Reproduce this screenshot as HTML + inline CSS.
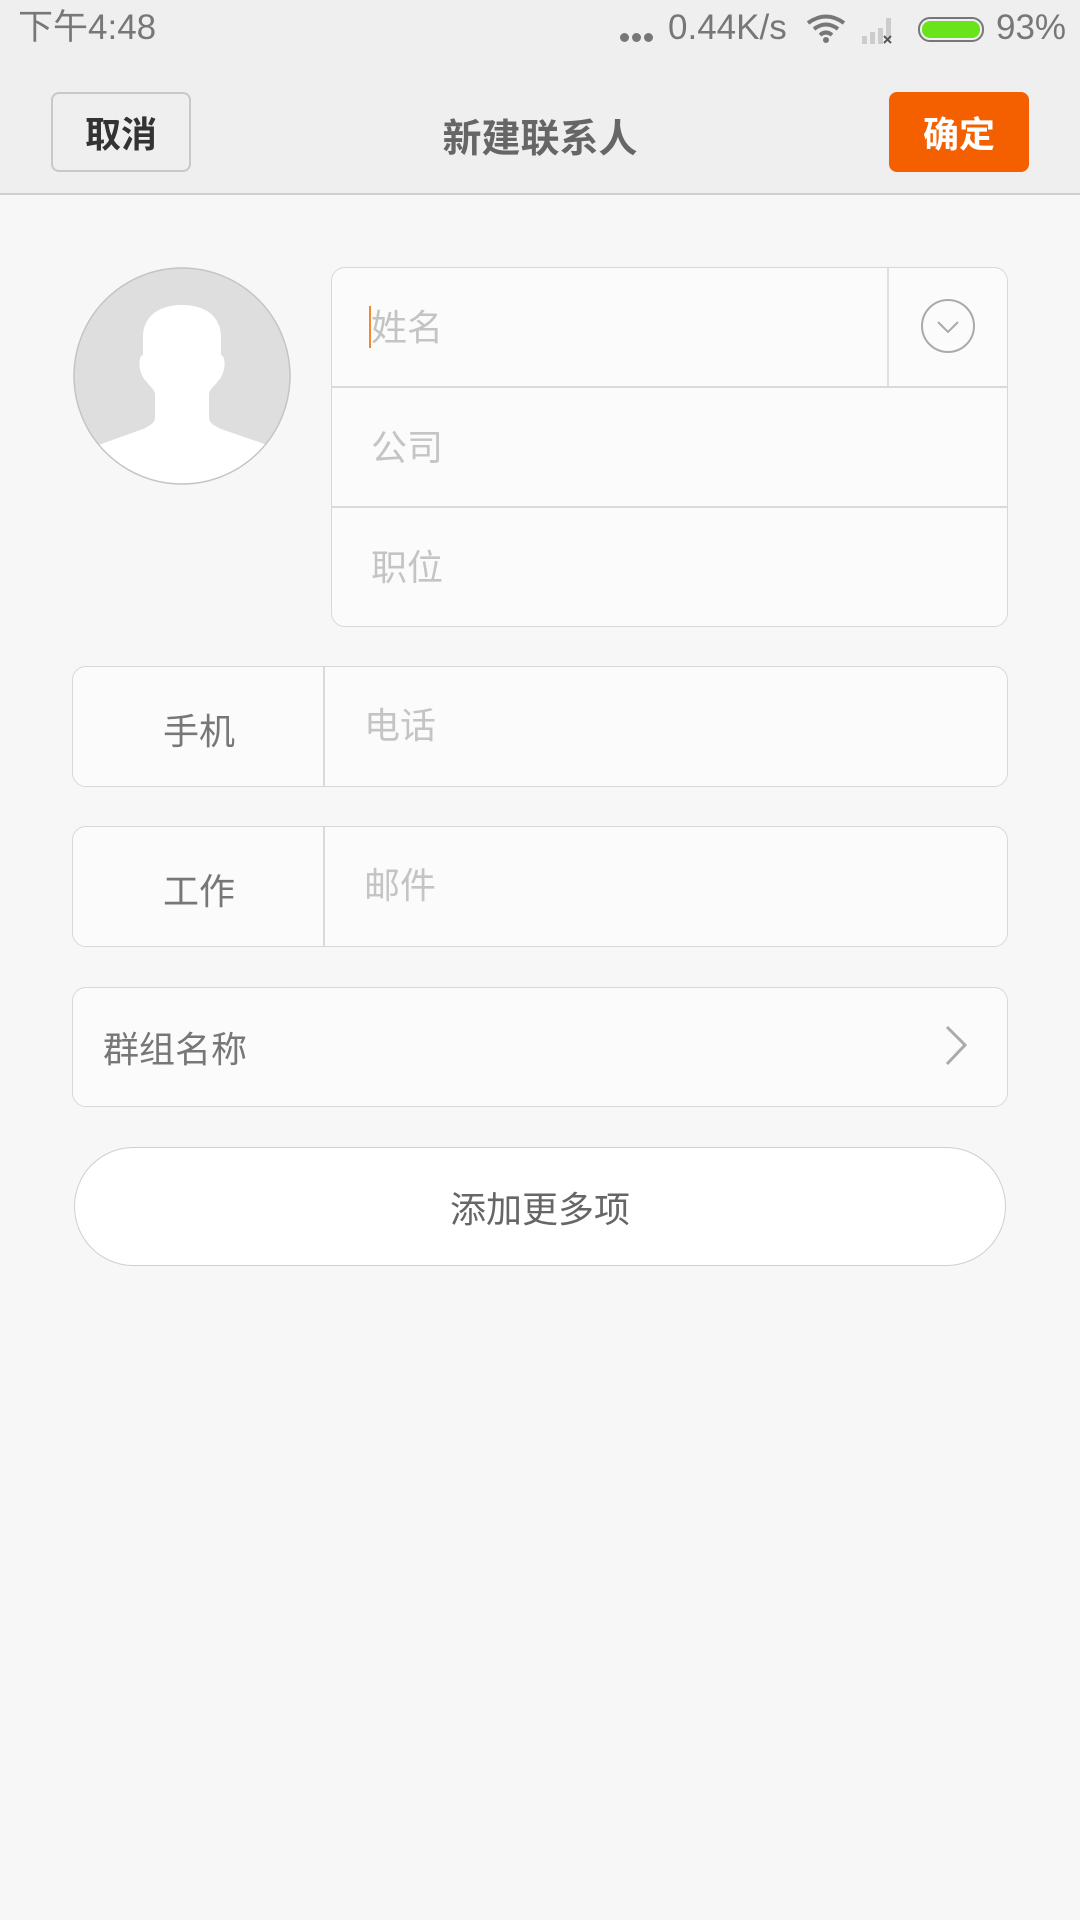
<!DOCTYPE html>
<html><head><meta charset="utf-8"><style>
*{margin:0;padding:0;box-sizing:border-box}
body{width:1080px;height:1920px;background:#f7f7f7;font-family:"Liberation Sans","Noto Sans CJK SC",sans-serif;position:relative;overflow:hidden}
.abs{position:absolute}
.top{left:0;top:0;width:1080px;height:195px;background:#efefef;border-bottom:2px solid #cfcfcf}
.st{font-size:35px;color:#777;top:7px;line-height:42px}
.btn{top:92px;height:80px;border-radius:8px;font-size:36px;font-weight:bold;display:flex;align-items:center;justify-content:center}
.box{background:#fbfbfb;border:1.5px solid #d8d8d8;border-radius:14px}
.ph{font-size:36px;color:#c4c4c4}
.lb{font-size:36px;color:#777}
</style></head><body>
<div class="abs top"></div>
<div class="abs st" style="left:18px">下午4:48</div>
<div class="abs" style="left:620px;top:33px;width:9px;height:9px;border-radius:50%;background:#777;box-shadow:12px 0 #777,24px 0 #777"></div>
<div class="abs st" style="left:668px">0.44K/s</div>
<svg class="abs" style="left:806px;top:14px" width="40" height="30" viewBox="0 0 40 30"><path d="M2 9 Q20 -4 38 9" stroke="#777" stroke-width="4" fill="none"/><path d="M8 15 Q20 6 32 15" stroke="#777" stroke-width="4" fill="none"/><path d="M14 21 Q20 16 26 21" stroke="#777" stroke-width="4" fill="none"/><circle cx="20" cy="26" r="3" fill="#777"/></svg>
<svg class="abs" style="left:860px;top:14px" width="42" height="32"><rect x="2" y="22" width="5" height="8" fill="#ccc"/><rect x="10" y="18" width="5" height="12" fill="#ccc"/><rect x="18" y="14" width="5" height="16" fill="#ccc"/><rect x="26" y="4" width="5" height="22" fill="#ccc"/><path d="M24 22l7 7M31 22l-7 7" stroke="#555" stroke-width="2"/></svg>
<div class="abs" style="left:918px;top:17px;width:66px;height:25px;border:2.5px solid #777;border-radius:12px;padding:2px"><div style="width:100%;height:100%;background:#6ae41a;border-radius:8px"></div></div>
<div class="abs st" style="left:996px">93%</div>
<div class="abs btn" style="left:51px;width:140px;border:2px solid #c8c8c8;color:#333">取消</div>
<div class="abs" style="left:0;width:1080px;top:108px;text-align:center;font-size:39px;color:#666;font-weight:bold">新建联系人</div>
<div class="abs btn" style="left:889px;width:140px;background:#f45f00;color:#fff">确定</div>

<svg class="abs" style="left:73px;top:267px" width="220" height="220" viewBox="0 0 220 220">
<defs><clipPath id="c"><circle cx="109" cy="109" r="108"/></clipPath></defs>
<circle cx="109" cy="109" r="108" fill="#dedede"/>
<g clip-path="url(#c)"><path d="M109 38 C85 38 70 50 70 70 L70 88 C64 90 66 108 73 114 C77 120 82 122 82 128 L82 150 C82 156 78 158 70 162 L20 180 L20 230 L200 230 L200 180 L148 162 C140 158 136 156 136 150 L136 128 C136 122 141 120 145 114 C152 108 154 90 148 88 L148 70 C148 50 133 38 109 38Z" fill="#fff"/></g>
<circle cx="109" cy="109" r="108" fill="none" stroke="#c4c4c4" stroke-width="1.5"/>
</svg>

<div class="abs box" style="left:331px;top:267px;width:677px;height:360px"></div>
<div class="abs" style="left:332px;top:386px;width:675px;height:1.5px;background:#dadada"></div>
<div class="abs" style="left:332px;top:506px;width:675px;height:1.5px;background:#dadada"></div>
<div class="abs" style="left:887px;top:268px;width:1.5px;height:118px;background:#e0e0e0"></div>
<div class="abs" style="left:369px;top:306px;width:2px;height:42px;background:#f08a30"></div>
<div class="abs ph" style="left:371px;top:299px">姓名</div>
<div class="abs ph" style="left:371px;top:419px">公司</div>
<div class="abs ph" style="left:371px;top:539px">职位</div>
<svg class="abs" style="left:918px;top:296px" width="60" height="60"><circle cx="30" cy="30" r="26" fill="none" stroke="#aaa" stroke-width="2"/><path d="M20 26 L30 36 L40 26" stroke="#aaa" stroke-width="2" fill="none"/></svg>

<div class="abs box" style="left:72px;top:666px;width:936px;height:121px"></div>
<div class="abs" style="left:323px;top:667px;width:1.5px;height:119px;background:#dadada"></div>
<div class="abs lb" style="left:163px;top:703px">手机</div>
<div class="abs ph" style="left:364px;top:697px">电话</div>

<div class="abs box" style="left:72px;top:826px;width:936px;height:121px"></div>
<div class="abs" style="left:323px;top:827px;width:1.5px;height:119px;background:#dadada"></div>
<div class="abs lb" style="left:163px;top:863px">工作</div>
<div class="abs ph" style="left:364px;top:857px">邮件</div>

<div class="abs box" style="left:72px;top:987px;width:936px;height:120px"></div>
<div class="abs lb" style="left:103px;top:1021px">群组名称</div>
<svg class="abs" style="left:940px;top:1022px" width="32" height="48"><path d="M7 5 L25 23 L7 42" stroke="#aaa" stroke-width="3" fill="none"/></svg>

<div class="abs" style="left:74px;top:1147px;width:932px;height:119px;background:#fff;border:1.5px solid #cfcfcf;border-radius:60px"></div>
<div class="abs lb" style="left:0;width:1080px;text-align:center;top:1181px;color:#666">添加更多项</div>
</body></html>
